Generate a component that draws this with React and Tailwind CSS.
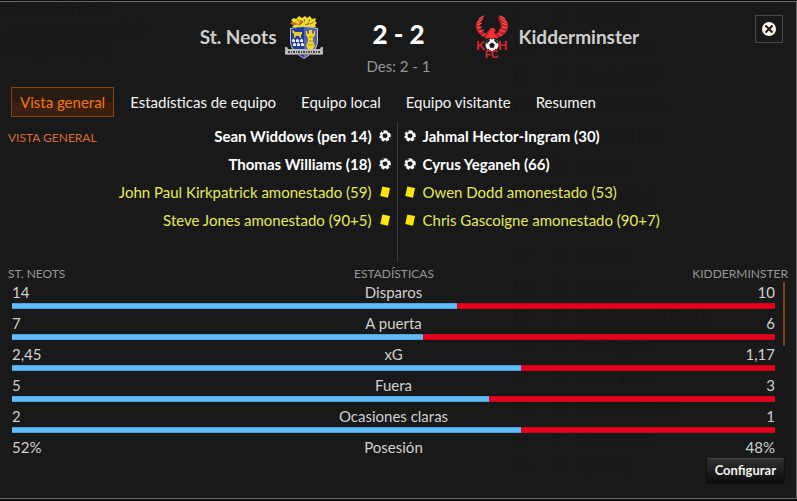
import React from "react";

const tabs = ["Vista general", "Estadísticas de equipo", "Equipo local", "Equipo visitante", "Resumen"];

const homeEvents = [
  { type: "goal", text: "Sean Widdows (pen 14)" },
  { type: "goal", text: "Thomas Williams (18)" },
  { type: "card", text: "John Paul Kirkpatrick amonestado (59)" },
  { type: "card", text: "Steve Jones amonestado (90+5)" },
];

const awayEvents = [
  { type: "goal", text: "Jahmal Hector-Ingram (30)" },
  { type: "goal", text: "Cyrus Yeganeh (66)" },
  { type: "card", text: "Owen Dodd amonestado (53)" },
  { type: "card", text: "Chris Gascoigne amonestado (90+7)" },
];

const stats = [
  { label: "Disparos", home: "14", away: "10", share: 14 / 24 },
  { label: "A puerta", home: "7", away: "6", share: 7 / 13 },
  { label: "xG", home: "2,45", away: "1,17", share: 2 / 3 },
  { label: "Fuera", home: "5", away: "3", share: 5 / 8 },
  { label: "Ocasiones claras", home: "2", away: "1", share: 2 / 3 },
  { label: "Posesión", home: "52%", away: "48%", share: null },
];

const standings = [
  [9, "Stratford"], [10, "King's Lynn"], [11, "Macclesfield"], [12, "South Shields"],
  [13, "Bradford (PA)"], [14, "Alfreton"], [15, "AFC United"], [16, "Nantwich"],
  [17, "Chorley"], [18, "Radcliffe"], [19, "Peterborough Sports"], [20, "Leamington"],
  [21, "Warrington"], [22, "Nuneaton Boro"], [23, "Scunthorpe"], [24, "Spalding"],
];

function NeotsCrest() {
  return (
    <svg viewBox="0 0 38 43" className="h-[43px] w-[38px]" role="img" aria-label="Escudo de St. Neots">
      <path d="M6 4l3-2 2 1 3-3 3 2 3-2 2 2 3-2 2 3 4-1-1 3 2 2-2 2 1 2-5 1H11l-4-1 2-2-4-2 3-1z" fill="#f0dc2c" />
      <path d="M6 7l3-1 4 2-2 1-4 0zM15 4l3 1-1 3-3 0zM23 6l2 2-3 1z" fill="#d4632a" />
      <path d="M12 3l2 2M20 3l-1 3M25 3l-1 3M29 6l-4 2M13 9l3-1M20 9l3-1" stroke="#8b7715" strokeWidth="1" />
      <path d="M5 12q14-3 28 0v13c0 8-6 13-14 18C11 38 5 33 5 25z" fill="#b9c1da" />
      <path d="M6 13q6-2 13-2v31C11 37 6 32 6 25z" fill="#243c92" />
      <path d="M19 11q7 0 13 2v12c0 7-5 12-13 17z" fill="#5266aa" />
      <path d="M8 14l2 2h5l2 0 0 2-1 1v3h-1l-1-2h-3l-1 2H9l0-4-2-2z" fill="#e5cc2e" />
      <path d="M7 24l1.500-1.500 1.500 1.500v2H7zM11 24l1.500-1.500 1.500 1.500v2h-3zM15 24l1.500-1.500 1.500 1.500v2h-3zM8 28l1.500-1.500 1.500 1.500v2H8zM12 28l1.500-1.500 1.500 1.500v2h-3zM16 28l1.500-1.500 1.500 1.500v2h-3z" fill="#e8ecf6" />
      <path d="M24 14h3v4l2-1v-2h1v4l-2 3v3l2 5-2 3h-5l-2-3 2-5v-3l-2-3v-4h1v2l2 1z" fill="#f0d62c" />
      <path d="M24 21h4M24 25h4M23 29h5" stroke="#ad9425" strokeWidth="1" />
      <path d="M0 31h2l1 2h32l1-2h2v8H0z" fill="#bcbcb9" />
      <path d="M0 38.500h38" stroke="#858585" strokeWidth="1" />
      <path d="M3 36h32" stroke="#484848" strokeWidth="2" strokeDasharray="2 1 1 1" />
    </svg>
  );
}

function KidderminsterCrest() {
  return (
    <svg viewBox="0 0 34 44" className="h-[44px] w-[34px] overflow-visible" role="img" aria-label="Escudo de Kidderminster">
      <path d="M9 0C3 3 0 8 1 13c1 5 6 9 12 10h8c6-1 11-5 12-10 1-5-2-10-8-13l-2 3 2 4 1 5-3 5-4 3-1-4-3-2-3 3-1 3-3-3-3-5 1-5 2-4z" fill="#c91f27" />
      <path d="M9 1L4 4M8 4L2 8M7 8l-5 2M7 12l-5 1M9 15l-5 2M11 18l-4 3M25 1l5 3M26 4l6 4M27 8l5 2M27 12l5 1M25 15l5 2M23 18l4 3" stroke="#ee6660" strokeWidth="1" />
      <path d="M14 17l2-4h3l2 3-2 1 4 7-3-1-3 1-3-1-4 1z" fill="#ef3036" />
      <text x="1" y="35" fill="#d5222a" className="font-['Liberation_Sans'] text-[13px] font-bold">K</text>
      <text x="23" y="35" fill="#d5222a" className="font-['Liberation_Sans'] text-[13px] font-bold">H</text>
      <circle cx="17" cy="30" r="6.500" fill="#f3f3f3" />
      <path d="M17 27.500l2.800 2-1 3.300h-3.600l-1-3.300zM12 26l2-2 1 1-2 3-2 1zM22 26l-2-2-1 1 2 3 2 1zM12 34l2 0 0 2zM22 34l-2 0 0 2zM16 23.500h2l-1 1.500z" fill="#161616" />
      <text x="10" y="43" fill="#e0272e" className="font-['Liberation_Sans'] text-[10px] font-bold">FC</text>
    </svg>
  );
}

function BallIcon() {
  return (
    <svg viewBox="0 0 12 12" className="size-3 shrink-0" aria-hidden="true">
      <circle cx="6" cy="6" r="5.800" fill="#fff" />
      <path d="M4.300 3.800l3.200-.3 1.200 2.500-1.900 2.300-2.800-.9-.5-2.200z" fill="#191919" />
      <path d="M2.500 0L5.200 1.500 3 2.800zM8.600 0l.1 2.400 2.800.4zM12 7l-2.200.2.200 2.900zM4.800 12l1.200-2.200 2.400 2zM0 8l2.400.3-.2 2.700zM0 3.600l1.800 1.600L0 6.800z" fill="#191919" />
    </svg>
  );
}

function CardIcon() {
  return (
    <svg viewBox="0 0 12 12" className="size-3 shrink-0" aria-hidden="true">
      <path d="M3.300 .5l7.700 1.600-2 9.600-7.700-1.600z" fill="#ffe60a" />
    </svg>
  );
}

function EventList({ events, side }) {
  const home = side === "home";
  return (
    <ul className={home ? "flex-1 pr-[6px]" : "flex-1 border-l border-[#3a3a3a] pl-[6px]"}>
      {events.map((event) => (
        <li
          key={event.text}
          className={`flex h-7 items-center gap-[7px] whitespace-nowrap text-[15px] ${home ? "flex-row-reverse" : ""} ${
            event.type === "goal" ? "font-bold text-white" : "text-[#e4e95c]"
          }`}
        >
          {event.type === "goal" ? <BallIcon /> : <CardIcon />}
          <span>{event.text}</span>
        </li>
      ))}
    </ul>
  );
}

function StatRow({ stat }) {
  return (
    <li className="h-[31px]">
      <div className="grid h-[22px] grid-cols-[1fr_auto_1fr] text-[15px] leading-[22px] text-[#d0d0d0]">
        <span>{stat.home}</span>
        <span>{stat.label}</span>
        <span className="text-right">{stat.away}</span>
      </div>
      {stat.share !== null && (
        <div className="flex h-[6px] bg-[#e6001c]">
          <div className="border-y border-[#4fa3dc] bg-[#60bdfb]" style={{ width: `${stat.share * 100}%` }} />
          <div className="flex-1 border-y border-[#c4061c]" />
        </div>
      )}
    </li>
  );
}

function Backdrop() {
  return (
    <div aria-hidden="true" className="pointer-events-none absolute inset-0 overflow-hidden text-[15px] text-[#161616]">
      <div className="absolute left-[6px] top-[-5px]">
        <p className="h-[22px] text-base font-bold leading-[22px]">Kidderminster</p>
        <p className="h-5 leading-5">J. Hector-Ingram (30)</p>
        <p className="h-5 leading-5">C. Yeganeh (66)</p>
      </div>
      <ul className="absolute -top-[2px] left-[512px]">
        {standings.map(([position, team]) => (
          <li key={team} className="flex h-[30px] items-center gap-7">
            <span className="w-[14px]">{position}</span>
            <span className="flex items-center gap-[14px]">
              <span className="h-3 w-2 rounded-sm bg-[#171717]" />
              {team}
            </span>
          </li>
        ))}
      </ul>
    </div>
  );
}

export default function App() {
  return (
    <div className="min-h-screen bg-[#0c0c0c] pb-[2px] pt-px font-['Lato',sans-serif]">
      <main className="relative flex min-h-[498px] flex-col border-y border-r border-[#6a6a6a] bg-[#191919]">
        <Backdrop />

        <header className="relative grid h-[85px] grid-cols-[1fr_152px_1fr] pl-px pt-3">
          <div className="flex h-[46px] items-center justify-end gap-2">
            <h2 className="text-[19px] font-bold leading-6 text-[#cfcfcf]">St. Neots</h2>
            <NeotsCrest />
          </div>
          <div className="flex flex-col items-center">
            <h1 className="h-10 text-[26px] font-black leading-10 text-white">2 - 2</h1>
            <p className="text-[15px] leading-6 text-[#969696]">Des: 2 - 1</p>
          </div>
          <div className="flex h-[46px] items-center gap-[10px]">
            <KidderminsterCrest />
            <h2 className="text-[19px] font-bold leading-6 text-[#cfcfcf]">Kidderminster</h2>
          </div>
          <button type="button" aria-label="Cerrar" className="absolute right-[13px] top-[13px] flex size-7 items-center justify-center border border-[#484848]">
            <svg viewBox="0 0 14 14" className="size-[14px]">
              <circle cx="7" cy="7" r="7" fill="#fff8ea" />
              <path d="M3.500 3.500l7 7M10.500 3.500l-7 7" stroke="#191919" strokeWidth="2" />
            </svg>
          </button>
        </header>

        <nav className="relative flex gap-[7px] pl-[11px]">
          {tabs.map((tab, index) => (
            <button
              key={tab}
              type="button"
              className={`h-[30px] whitespace-nowrap border px-2 text-[15px] leading-7 ${
                index === 0
                  ? "border-[#8c4510] bg-linear-to-b from-[#291c14] from-50% to-[#3a2010] to-50% text-[#f87508]"
                  : "border-transparent text-[#f4f4f4]"
              }`}
            >
              {tab}
            </button>
          ))}
        </nav>

        <section className="relative mt-[5px] flex h-[140px] pr-[2px]">
          <h3 className="absolute left-2 top-2 text-xs text-[#dd6a38]">VISTA GENERAL</h3>
          <EventList events={homeEvents} side="home" />
          <EventList events={awayEvents} side="away" />
        </section>

        <section className="relative">
          <div className="mt-1 grid h-[15px] grid-cols-[1fr_auto_1fr] items-center px-2 text-xs text-[#969696]">
            <h3>ST. NEOTS</h3>
            <h3 className="pr-2">ESTADÍSTICAS</h3>
            <h3 className="text-right">KIDDERMINSTER</h3>
          </div>
          <div className="flex">
            <ul className="flex-1 pl-3">
              {stats.map((stat) => (
                <StatRow key={stat.label} stat={stat} />
              ))}
            </ul>
            <div className="ml-2 mr-[11px] w-[2px] bg-[#161616] pt-px">
              <div className="h-16 bg-[#804226]" />
            </div>
          </div>
        </section>

        <footer className="relative -mt-[9px] flex justify-end pr-[11px]">
          <button type="button" className="h-[26px] rounded-[3px] border border-[#101010] border-t-[#444] bg-linear-to-b from-[#303030] to-[#0d0d0d] px-2 text-[13px] font-bold text-[#f3f3f3]">
            Configurar
          </button>
        </footer>
      </main>
    </div>
  );
}
